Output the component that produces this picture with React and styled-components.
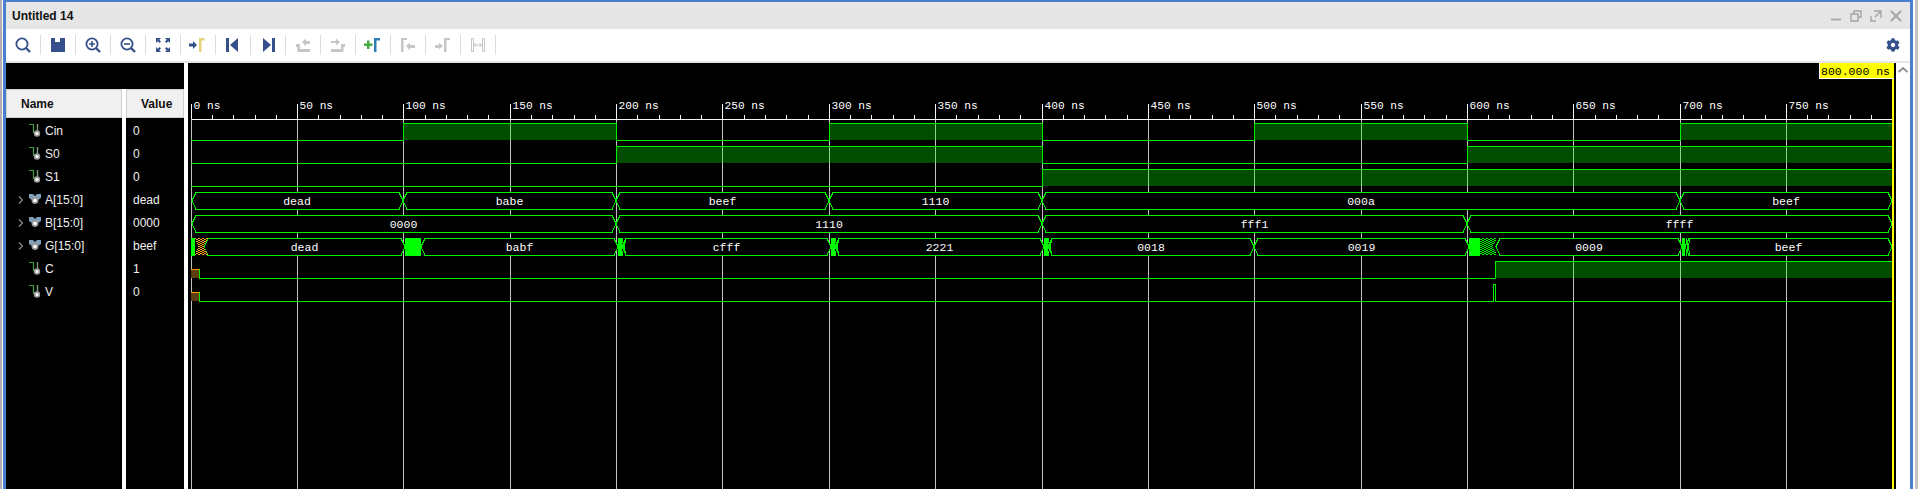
import React from 'react'
import styled, { createGlobalStyle } from 'styled-components'
import { FaCog } from 'react-icons/fa'

const NAVY = '#35508a'
const GREY = '#c6c6c6'
const TRACE = '#00f000'

const Global = createGlobalStyle`
  html, body { margin: 0; padding: 0; background: #fff; overflow: hidden; }
  #root { height: 489px; }
`

const Page = styled.div`
  display: flex;
  height: 489px;
  width: 1918px;
  box-sizing: border-box;
  background: #fff;
  border-left: 2px solid #b0b0b0;
  border-right: 3px solid #c4c4c4;
  padding: 0 2px 0 1px;
  font-family: "Liberation Sans", Arial, sans-serif;
`
const Window = styled.div`
  flex: 1;
  display: flex;
  flex-direction: column;
  min-width: 0;
  border: 3px solid #4a7fd0;
  border-width: 2px 3px 0 3px;
`
const TitleBar = styled.div`
  height: 27px;
  flex: none;
  display: flex;
  align-items: center;
  justify-content: space-between;
  background: #e6e6e6;
  padding: 0 8px 0 6px;
`
const Title = styled.div`
  font-size: 12px;
  font-weight: 700;
  color: #111;
`
const WinButtons = styled.div`
  display: flex;
  gap: 8px;
  margin-top: 1px;
`
const Toolbar = styled.div`
  height: 32px;
  flex: none;
  display: flex;
  align-items: center;
  background: #fff;
  border-bottom: 2px solid #e6e6e6;
`
const ToolButton = styled.div`
  width: 35px;
  height: 20px;
  flex: none;
  box-sizing: border-box;
  display: flex;
  align-items: center;
  justify-content: center;
  border-right: 1px solid #dcdcdc;
`
const Gear = styled.div`
  margin-left: auto;
  margin-right: 10px;
  display: flex;
  color: ${NAVY};
  font-size: 14px;
`
const Main = styled.div`
  flex: 1;
  min-height: 0;
  display: flex;
`
const Side = styled.div`
  width: 178px;
  flex: none;
  display: flex;
  flex-direction: column;
`
const SideTop = styled.div`
  height: 26px;
  flex: none;
  background: #000;
`
const Columns = styled.div`
  flex: 1;
  display: grid;
  grid-template-columns: 116px 58px;
  gap: 4px;
`
const Column = styled.div`
  background: #000;
  display: flex;
  flex-direction: column;
`
const HeadCell = styled.div`
  height: 29px;
  margin-bottom: 1px;
  flex: none;
  box-sizing: border-box;
  display: flex;
  align-items: center;
  padding: 1px 0 0 14px;
  background: #f0f0f0;
  border: 1px solid #d0d0d0;
  font-size: 12px;
  font-weight: 700;
  color: #111;
`
const NameRow = styled.div`
  height: 23px;
  display: flex;
  align-items: center;
  padding-left: 12px;
  font-size: 12px;
  color: #f0f0f0;
`
const ChevronSlot = styled.div`
  width: 11px;
  flex: none;
  display: flex;
`
const SignalIcon = styled.svg`
  width: 12px;
  height: 13px;
  flex: none;
  margin-right: 4px;
`
const ValueRow = styled.div`
  height: 23px;
  display: flex;
  align-items: center;
  padding-left: 7px;
  font-size: 12px;
  color: #f0f0f0;
`
const WaveGap = styled.div`
  width: 4px;
  flex: none;
`
const Wave = styled.svg`
  width: 1708px;
  height: 426px;
  flex: none;
  display: block;
  background: #000;
`
const ScrollBar = styled.div`
  flex: 1;
  display: flex;
  justify-content: center;
  padding-top: 4px;
`
const RulerLabel = styled.text`
  font-family: "Liberation Mono", monospace;
  font-size: 11.2px;
  fill: #fff;
`
const BusLabel = styled.text`
  font-family: "Liberation Mono", monospace;
  font-size: 11.5px;
  fill: #fff;
  text-anchor: middle;
`
const FlagLabel = styled.text`
  font-family: "Liberation Mono", monospace;
  font-size: 11.5px;
  fill: #000;
`

// time to pixel, page coordinates (svg viewBox is offset to match)
const tx = ns => Math.floor(191.2 + ns * 2.127)

const bits = [
  { low: 140, edges: [100, 200, 300, 400, 500, 600, 700] },
  { low: 163, edges: [200, 400, 600] },
  { low: 186, edges: [400] },
]

const buses = [
  { top: 192, segs: [[0, 100, 'dead'], [100, 200, 'babe'], [200, 300, 'beef'], [300, 400, '1110'], [400, 700, '000a'], [700, 800, 'beef']] },
  { top: 215, segs: [[0, 200, '0000'], [200, 400, '1110'], [400, 600, 'fff1'], [600, 800, 'ffff']] },
]

// G settles a little after each input change, hence pixel edges here
const gSegs = [
  [204, 405, 'dead'],
  [421, 618, 'babf'],
  [622, 831, 'cfff'],
  [835, 1044, '2221'],
  [1048, 1254, '0018'],
  [1254, 1469, '0019'],
  [1496, 1682, '0009'],
  [1685, 1892, 'beef'],
]
const gBlocks = [
  [191, 195], [405, 421], [618, 622], [831, 835], [1044, 1048], [1469, 1480], [1682, 1685],
]
// short glitches leave a second crossing right after the solid part
const gCrossings = [618, 831, 1044, 1682]

const hexPath = (x1, x2, top, s = 4) => {
  const bot = top + 17
  const mid = top + 8.5
  return `M${x1} ${mid}L${x1 + s} ${top + 0.5}L${x2 - s} ${top + 0.5}L${x2} ${mid}L${x2 - s} ${bot + 0.5}L${x1 + s} ${bot + 0.5}Z`
}

const BitTrace = ({ low, edges }) => {
  const high = low - 17
  const pts = [0, ...edges, 800]
  return (
    <g>
      {pts.slice(0, -1).map((t, i) => {
        const x1 = tx(t)
        const x2 = tx(pts[i + 1])
        if (i % 2 === 0) {
          return <path key={t} d={`M${x1} ${low + 0.5}H${x2}`} stroke={TRACE} fill="none" />
        }
        return (
          <g key={t}>
            <rect x={x1} y={high} width={x2 - x1} height={17} fill="rgba(0,255,0,0.3)" />
            <path d={`M${x1 + 0.5} ${low + 0.5}V${high + 0.5}H${x2 + 0.5}V${low + 0.5}`} stroke={TRACE} fill="none" />
          </g>
        )
      })}
    </g>
  )
}

const StartBox = ({ y }) => (
  <g shapeRendering="crispEdges">
    <rect x="191" y={y} width="8" height="9" fill="#5c3e10" />
    <path d={`M191 ${y + 0.5}H199`} stroke="#ff9a00" />
    <path d={`M199.5 ${y}V${y + 9.5}`} stroke={TRACE} />
  </g>
)

const WaveChart = () => {
  const major = []
  for (let t = 0; t < 800; t += 50) major.push(t)
  const minor = []
  for (let t = 10; t < 800; t += 10) if (t % 50) minor.push(t)
  return (
    <Wave viewBox="188 63 1708 426" shapeRendering="crispEdges">
      <defs>
        <pattern id="orangeCheck" width="4" height="2" patternUnits="userSpaceOnUse">
          <rect width="4" height="2" fill="#ffa020" />
          <rect width="2" height="1" fill="#000" />
          <rect x="2" y="1" width="2" height="1" fill="#000" />
        </pattern>
        <pattern id="greenCheck" width="4" height="2" patternUnits="userSpaceOnUse">
          <rect width="4" height="2" fill="#00ff00" />
          <rect width="2" height="1" fill="#000" />
          <rect x="2" y="1" width="2" height="1" fill="#000" />
        </pattern>
      </defs>

      {major.map(t => (
        <path key={t} d={`M${tx(t) + 0.5} 119V489`} stroke="#c0c0c0" />
      ))}

      <path d="M192 119.5H1892" stroke="#f4f4f4" />
      {major.map(t => (
        <path key={t} d={`M${tx(t) + 0.5} 104V119`} stroke="#f4f4f4" />
      ))}
      {minor.map(t => (
        <path key={t} d={`M${tx(t) + 0.5} 115V119`} stroke="#f4f4f4" />
      ))}
      <g shapeRendering="auto">
        {major.map(t => (
          <RulerLabel key={t} x={tx(t) + 2.5} y="109">{t} ns</RulerLabel>
        ))}
      </g>

      {bits.map(b => <BitTrace key={b.low} {...b} />)}

      {buses.map(b => (
        <g key={b.top}>
          {b.segs.map(([t1, t2, label]) => (
            <g key={t1}>
              <path d={hexPath(tx(t1) + (t1 ? 0 : 1), tx(t2), b.top)} fill="#000" stroke={TRACE} />
              <g shapeRendering="auto">
                <BusLabel x={(tx(t1) + tx(t2)) / 2} y={b.top + 13}>{label}</BusLabel>
              </g>
            </g>
          ))}
        </g>
      ))}

      {gSegs.map(([x1, x2, label]) => (
        <g key={x1}>
          <path d={hexPath(x1, x2, 238)} fill="#000" stroke={TRACE} />
          <g shapeRendering="auto">
            <BusLabel x={(x1 + x2) / 2} y="251">{label}</BusLabel>
          </g>
        </g>
      ))}
      {gCrossings.map(x => (
        <path key={x} d={`M${x + 4} 238.500L${x + 8} 255.500M${x + 4} 255.500L${x + 8} 238.500`} stroke={TRACE} fill="none" />
      ))}
      <polygon points="195,238 208,238 204,246.500 208,255 195,255 198,246.500" fill="url(#orangeCheck)" />
      <polygon points="1480,238 1497,238 1493,246.500 1497,255 1480,255" fill="url(#greenCheck)" />
      {gBlocks.map(([x1, x2]) => (
        <rect key={x1} x={x1} y="238" width={x2 - x1} height="18" fill="#00ff00" />
      ))}

      {/* C rises late, V has one short pulse just before it */}
      <path d="M199 278.500H1495V261.500H1892" stroke={TRACE} fill="none" />
      <rect x="1495" y="261" width="397" height="17" fill="rgba(0,255,0,0.3)" />
      <path d="M199 301.500H1493V284.500H1495V301.500H1892" stroke={TRACE} fill="none" />
      <StartBox y={269} />
      <StartBox y={292} />

      <rect x="1892" y="63" width="2" height="426" fill="#ffff00" />
      <rect x="1819" y="63" width="75" height="16" fill="#fff" />
      <rect x="1820" y="63" width="74" height="15" fill="#ffff00" />
      <g shapeRendering="auto">
        <FlagLabel x="1821" y="74.500">800.000 ns</FlagLabel>
      </g>
    </Wave>
  )
}

const Svg = ({ children }) => (
  <svg width="20" height="20" viewBox="0 0 20 20">{children}</svg>
)

const Lens = ({ children }) => (
  <Svg>
    <circle cx="9" cy="9" r="5.600" fill="none" stroke={NAVY} strokeWidth="1.800" />
    <path d="M13 13l4 4" stroke={NAVY} strokeWidth="2.400" />
    {children}
  </Svg>
)

const icons = [
  <Lens key="find" />,
  <Svg key="save">
    <path fillRule="evenodd" d="M3 3h14v14H3zM7 3v4h5V3z" fill={NAVY} />
    <path d="M9.500 3h2v3h-2z" fill="#fff" />
  </Svg>,
  <Lens key="zin"><path d="M6 9h6M9 6v6" stroke={NAVY} strokeWidth="1.600" /></Lens>,
  <Lens key="zout"><path d="M6 9h6" stroke={NAVY} strokeWidth="1.600" /></Lens>,
  <Svg key="fit">
    <path d="M3 3h5L6.300 4.700 8 6.500 6.500 8 4.700 6.300 3 8zM17 3v5l-1.700-1.700L13.500 8 12 6.500l1.700-1.800L12 3zM3 17v-5l1.700 1.700L6.500 12 8 13.500l-1.700 1.800L8 17zM17 17h-5l1.700-1.700L12 13.500l1.500-1.500 1.800 1.700L17 12z" fill={NAVY} />
  </Svg>,
  <Svg key="cursor">
    <path d="M1 8.500h4V6l4 4-4 4v-2.500H1z" fill={NAVY} />
    <path d="M11 3h5.500v2.500H13.500V17H11z" fill="#e6d27a" />
  </Svg>,
  <Svg key="start">
    <path d="M3 3h3v14H3zM15 3v14L7 10z" fill={NAVY} />
  </Svg>,
  <Svg key="end">
    <path d="M14 3h3v14h-3zM5 3v14l8-7z" fill={NAVY} />
  </Svg>,
  <Svg key="prevEdge">
    <path d="M3 9h4v5h10v3H4.500v-5H3zM9 7l4-3.500V6h4v3h-4v2.500z" fill={GREY} />
  </Svg>,
  <Svg key="nextEdge">
    <path d="M3 14h10V9h4v3h-1.500v5H3zM3 6h5V3.500L12 7l-4 3.500V8H3z" fill={GREY} />
  </Svg>,
  <Svg key="addMarker">
    <path d="M1 8.500h3v-3h2.500v3h3V11h-3v3H4v-3H1z" fill="#45ab45" />
    <path d="M11 3h6v2.500h-3.500V17H11z" fill="#2f7db5" />
  </Svg>,
  <Svg key="prevMarker">
    <path d="M3 3h6v2H5.500v12H3z" fill={GREY} />
    <path d="M8 11l4-3.500V10h5v3h-5v2.500z" fill={GREY} />
  </Svg>,
  <Svg key="nextMarker">
    <path d="M11 3h6v2h-3.500v12H11z" fill={GREY} />
    <path d="M2 10h4V7.500l4 3.500-4 3.500V13H2z" fill={GREY} />
  </Svg>,
  <Svg key="span">
    <path d="M3.500 3.500h2v13h-2zM14.500 3.500h2v13h-2z" fill="none" stroke={GREY} strokeWidth="1" />
    <path d="M6 10h8M6.500 10l2-2M6.500 10l2 2M13.500 10l-2-2M13.500 10l-2 2" stroke={GREY} strokeWidth="1" fill="none" />
  </Svg>,
]

const WinIcon = ({ children }) => (
  <svg width="12" height="12" viewBox="0 0 12 12" fill="none" stroke="#a4a4a4" strokeWidth="1.400">{children}</svg>
)

const Chevron = () => (
  <svg width="6" height="8" viewBox="0 0 6 8" fill="none" stroke="#8c8c8c" strokeWidth="1.200">
    <path d="M1 .5L4.500 4 1 7.500" />
  </svg>
)

const BitIcon = () => (
  <SignalIcon viewBox="0 0 12 13">
    <path d="M0 .5h4.500V9" fill="none" stroke="#3f9f3f" strokeWidth="1.200" />
    <path d="M8.500 0v7" fill="none" stroke="#7aa07a" strokeWidth="1.400" />
    <circle cx="8" cy="9.500" r="2.400" fill="#fff" stroke="#9a9a9a" strokeWidth="1.600" />
  </SignalIcon>
)

const BusIcon = () => (
  <SignalIcon viewBox="0 0 12 13">
    <path d="M0 1h4l2 2 2-2h4v4l-3 2H3L0 5z" fill="#7f9fb8" />
    <circle cx="6" cy="7.500" r="2.600" fill="#fff" stroke="#9a9a9a" strokeWidth="1.600" />
  </SignalIcon>
)

const signals = [
  ['Cin', '0'], ['S0', '0'], ['S1', '0'],
  ['A[15:0]', 'dead', true], ['B[15:0]', '0000', true], ['G[15:0]', 'beef', true],
  ['C', '1'], ['V', '0'],
]

const App = () => (
  <Page>
    <Global />
    <Window>
      <TitleBar>
        <Title>Untitled 14</Title>
        <WinButtons>
          <WinIcon><path d="M1 9.500h10" strokeWidth="1.800" /></WinIcon>
          <WinIcon><path d="M4 3.500V1h7v6H8.500M1 4h7v7H1z" /></WinIcon>
          <WinIcon><path d="M4 1h7v7M11 1L5 7M1 6v5h5" /></WinIcon>
          <WinIcon><path d="M1 1l10 10M11 1L1 11" strokeWidth="1.800" /></WinIcon>
        </WinButtons>
      </TitleBar>
      <Toolbar>
        {icons.map(icon => <ToolButton key={icon.key}>{icon}</ToolButton>)}
        <Gear><FaCog /></Gear>
      </Toolbar>
      <Main>
        <Side>
          <SideTop />
          <Columns>
            <Column>
              <HeadCell>Name</HeadCell>
              {signals.map(([name, , bus]) => (
                <NameRow key={name}>
                  <ChevronSlot>{bus && <Chevron />}</ChevronSlot>
                  {bus ? <BusIcon /> : <BitIcon />}
                  {name}
                </NameRow>
              ))}
            </Column>
            <Column>
              <HeadCell>Value</HeadCell>
              {signals.map(([name, value]) => (
                <ValueRow key={name}>{value}</ValueRow>
              ))}
            </Column>
          </Columns>
        </Side>
        <WaveGap />
        <WaveChart />
        <ScrollBar>
          <svg width="10" height="6" viewBox="0 0 10 6" fill="none" stroke="#8c8c8c" strokeWidth="1.800">
            <path d="M.5 5L5 1l4.500 4" />
          </svg>
        </ScrollBar>
      </Main>
    </Window>
  </Page>
)

export default App
